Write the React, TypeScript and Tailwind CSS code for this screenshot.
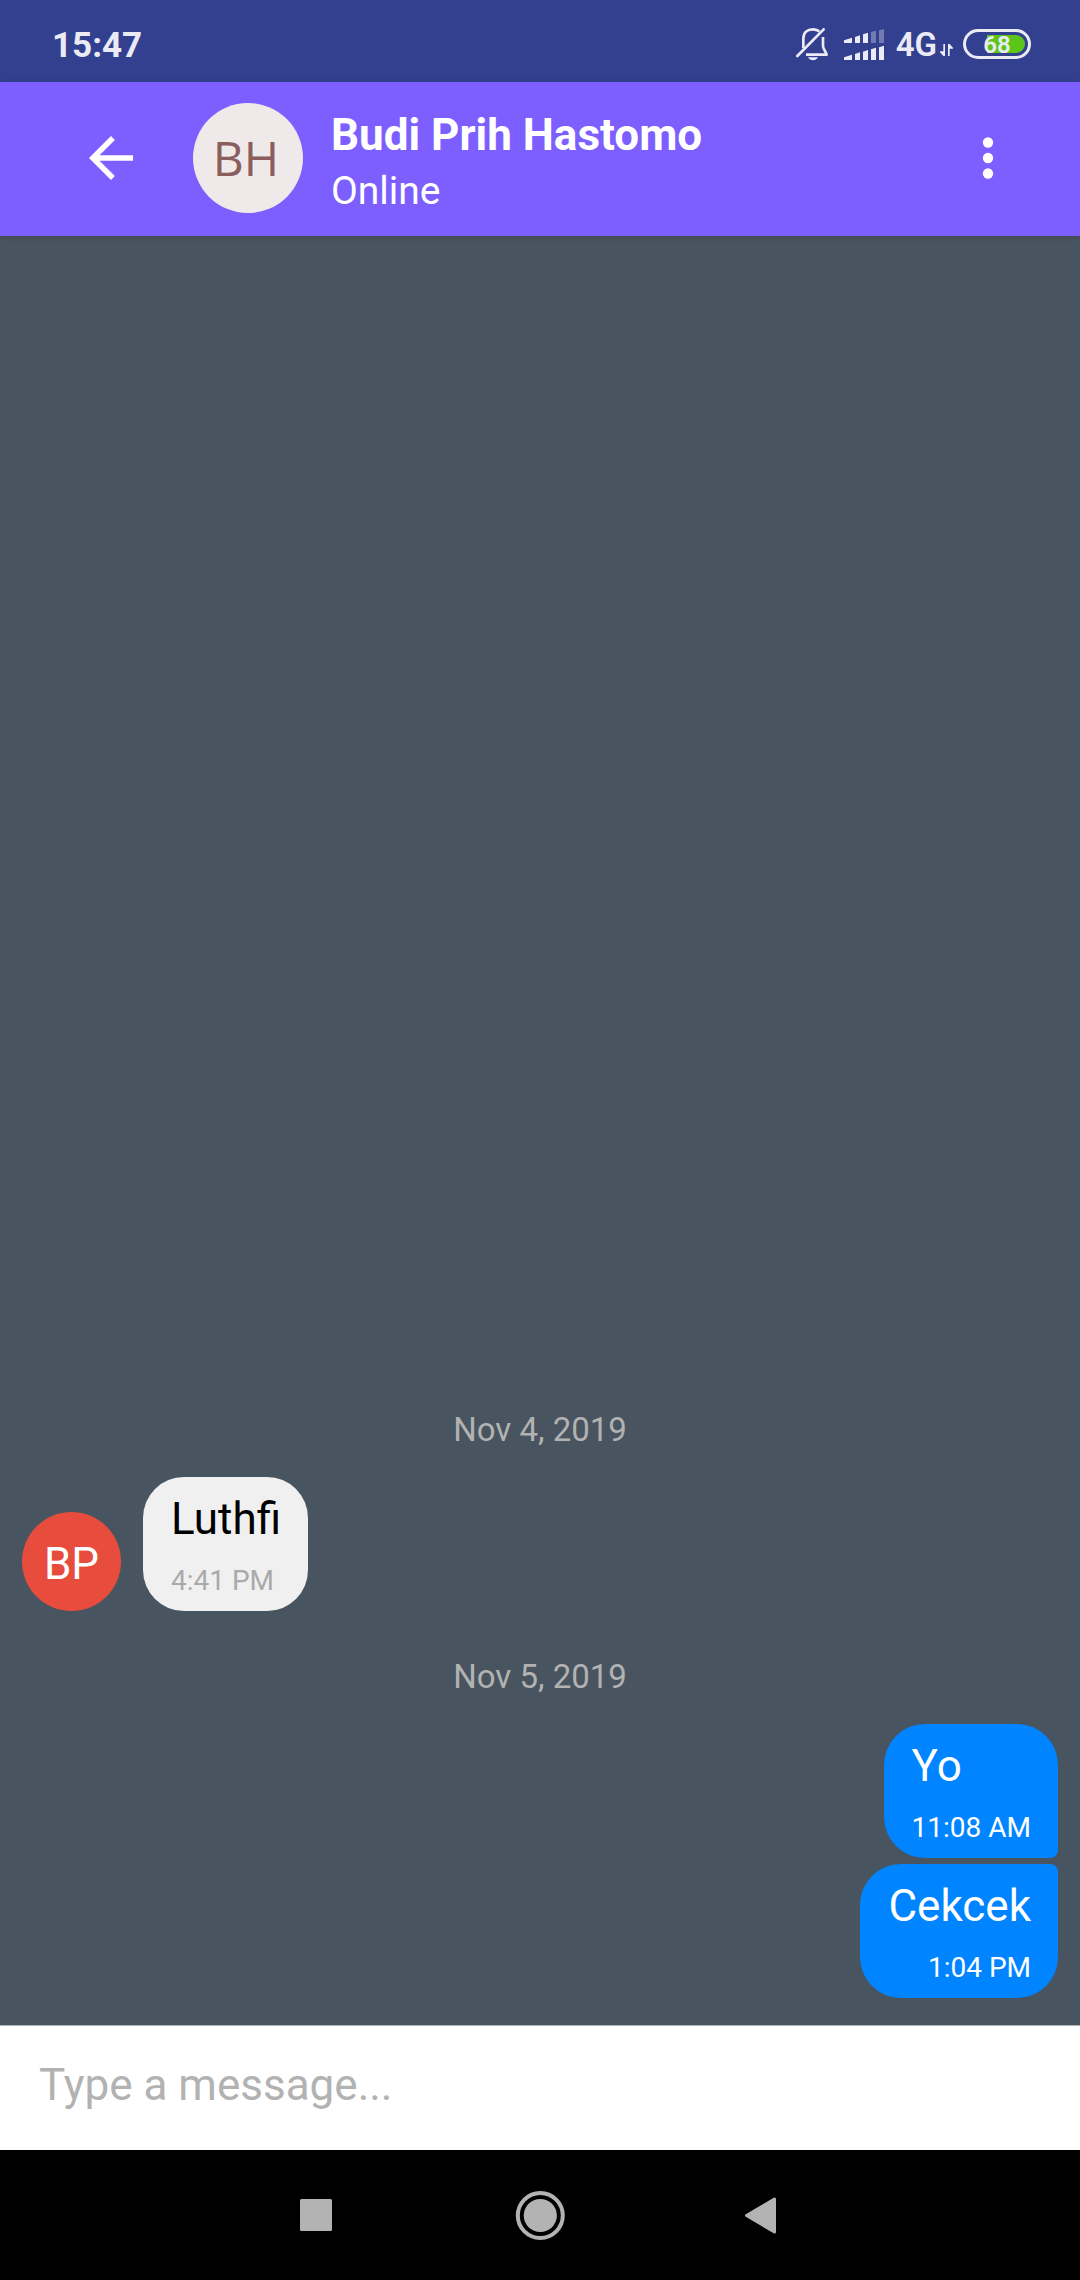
import React from "react";

type Message = { id: number; text: string; time: string; shape: string };

const outgoing: Message[] = [
  { id: 1, text: "Yo", time: "11:08 AM", shape: "rounded-[41px] rounded-br-[8px]" },
  { id: 2, text: "Cekcek", time: "1:04 PM", shape: "rounded-[41px] rounded-tr-[8px]" },
];

const BATTERY_LEVEL = 68;

function MutedBellIcon() {
  return (
    <svg className="h-[33px] w-8" viewBox="0 0 96 99" fill="none" stroke="#ebebf5" strokeWidth="8" aria-label="Notifications muted">
      <path d="M22 60V32C22 14 34 4 50 4c8 0 15 2 20 7" />
      <path d="M81 27v27c0 10 9 16 11 26H30" strokeLinejoin="round" />
      <path d="M4 84 83 4" strokeLinecap="round" />
      <path d="M36 88h30c-3 6-9 9-15 9s-12-3-15-9z" fill="#ebebf5" stroke="none" />
    </svg>
  );
}

function SignalIcon() {
  return (
    <svg className="h-[31px] w-10" viewBox="0 0 120 93" fill="#ebebf5" aria-label="Signal strength">
      <path d="M0 34l24-8v16H0zM33 24l15-5v23H33zM57 16l15-5v31H57z" />
      <path d="M81 9l15-4v37H81zM105 4l15-4v42h-15z" opacity=".35" />
      <path d="M0 85l24-8v16H0zM33 75l15-5v23H33zM57 68l15-5v30H57zM81 61l15-5v37H81zM105 55l15-5v43h-15z" />
    </svg>
  );
}

function StatusBar() {
  return (
    <div className="flex h-[82px] items-center justify-between bg-[#334090] pr-[49px] pl-[52px] text-[#ebebf5]">
      <time className="pt-[10px] text-[35px] leading-10 font-bold">15:47</time>
      <div className="flex items-center pt-[6px]">
        <MutedBellIcon />
        <div className="ml-4">
          <SignalIcon />
        </div>
        <span className="ml-3 pt-[2px] text-[33px] leading-10 font-semibold">4G</span>
        <svg className="mt-3 ml-[3px] h-3 w-[13px]" viewBox="0 0 39 36" fill="#ebebf5" aria-hidden="true">
          <path d="M10 0h5v36h-5L0 25v-3h10zM24 36h5V14h10v-3L29 0h-5z" />
        </svg>
        <div className="relative ml-[10px] flex h-[30px] w-[68px] justify-end rounded-full border-3 border-[#ebebf5] p-[3px]">
          <div className="h-full rounded-r-full bg-[#5bc518]" style={{ width: `${BATTERY_LEVEL}%` }} />
          <span className="absolute inset-0 text-center text-[24px] leading-[26px] font-semibold">{BATTERY_LEVEL}</span>
        </div>
      </div>
    </div>
  );
}

function ChatHeader() {
  return (
    <header className="z-10 flex h-[154px] items-center bg-[#7d5fff] pr-[61px] pb-[2px] pl-[78px] text-white shadow-[0_1px_6px_rgba(0,0,0,0.15)]">
      <button type="button" aria-label="Back">
        <svg className="size-[66px]" viewBox="0 0 24 24" fill="currentColor">
          <path d="M20 11H7.83l5.59-5.59L12 4l-8 8 8 8 1.41-1.41L7.83 13H20v-2z" />
        </svg>
      </button>
      <div className="ml-[49px] flex size-[110px] items-center justify-center rounded-full bg-[#f0e9e9] pr-1 font-['Open_Sans',sans-serif] text-[48px] text-[#8b5d5d]">
        BH
      </div>
      <div className="ml-7 flex-1 pt-[2px]">
        <h1 className="text-[44px] leading-[64px] font-bold">Budi Prih Hastomo</h1>
        <p className="text-[39px] leading-12">Online</p>
      </div>
      <button type="button" aria-label="More options">
        <svg className="size-[62px]" viewBox="0 0 24 24" fill="currentColor">
          <circle cx="12" cy="6" r="2" />
          <circle cx="12" cy="12" r="2" />
          <circle cx="12" cy="18" r="2" />
        </svg>
      </button>
    </header>
  );
}

function DayLabel({ children }: { children: React.ReactNode }) {
  return <div className="pb-7 text-center text-[33px] leading-[39px] text-[#b2b2b2]">{children}</div>;
}

function App() {
  return (
    <div className="flex min-h-screen flex-col bg-[#485460] font-[Roboto,sans-serif]">
      <StatusBar />
      <ChatHeader />

      <main className="flex flex-1 flex-col justify-end px-[22px] pb-[27px]">
        <DayLabel>Nov 4, 2019</DayLabel>
        <div className="mb-[46px] flex items-end gap-[22px]">
          <div className="flex size-[99px] items-center justify-center rounded-full bg-[#e74c3c] pt-1 text-[44px] text-white">BP</div>
          <div className="rounded-[41px] bg-[#f0f0f0] pt-[15px] pr-[27px] pb-[10px] pl-7">
            <p className="text-[44px] leading-[55px] text-black">Luthfi</p>
            <time className="mt-[13px] block text-[28px] leading-[41px] text-[#aaaaaa]">4:41 PM</time>
          </div>
        </div>

        <DayLabel>Nov 5, 2019</DayLabel>
        <div className="flex flex-col items-end gap-[6px]">
          {outgoing.map((m) => (
            <div key={m.id} className={`bg-[#0084ff] pt-[15px] pr-[27px] pb-[10px] pl-7 text-white ${m.shape}`}>
              <p className="text-[44px] leading-[55px]">{m.text}</p>
              <time className="mt-[13px] block text-right text-[28px] leading-[41px]">{m.time}</time>
            </div>
          ))}
        </div>
      </main>

      <input
        type="text"
        aria-label="Message"
        placeholder="Type a message..."
        className="h-[125px] w-full border-t border-[#b2b2b2] bg-white px-[39px] pb-[6px] text-[44px] text-black outline-none placeholder:text-[#b2b2b2]"
      />

      <nav className="flex h-[130px] items-center justify-center bg-black text-[#b3b3b3]" aria-label="System navigation">
        <button type="button" aria-label="Recent apps" className="flex w-56 justify-center">
          <svg className="size-[50px]" viewBox="0 0 50 50" fill="currentColor">
            <rect x="9" y="9" width="32" height="32" rx="1.5" />
          </svg>
        </button>
        <button type="button" aria-label="Home" className="flex w-56 justify-center">
          <svg className="size-[50px]" viewBox="0 0 50 50" fill="currentColor">
            <circle cx="25.3" cy="25.5" r="22.5" fill="none" stroke="currentColor" strokeWidth="4" />
            <circle cx="25.3" cy="25.5" r="16.6" />
          </svg>
        </button>
        <button type="button" aria-label="Back" className="flex w-56 justify-center">
          <svg className="size-[50px]" viewBox="0 0 50 50" fill="currentColor" stroke="currentColor" strokeWidth="3" strokeLinejoin="round">
            <path d="M7.500 25.500 35.500 9v33z" />
          </svg>
        </button>
      </nav>
    </div>
  );
}

export default App;
